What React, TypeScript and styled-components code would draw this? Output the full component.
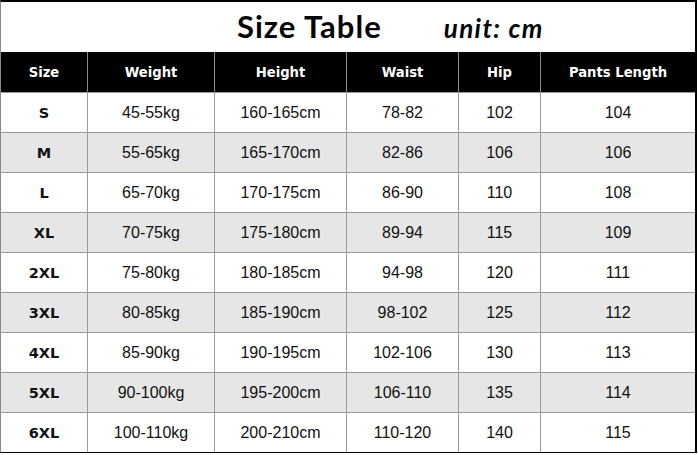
import React from "react";
import styled, { createGlobalStyle } from "styled-components";

const GlobalStyle = createGlobalStyle`
  html, body {
    margin: 0;
    padding: 0;
    background: #ffffff;
  }
`;

type Row = {
  size: string;
  weight: string;
  height: string;
  waist: string;
  hip: string;
  pants: string;
};

const rows: Row[] = [
  { size: "S", weight: "45-55kg", height: "160-165cm", waist: "78-82", hip: "102", pants: "104" },
  { size: "M", weight: "55-65kg", height: "165-170cm", waist: "82-86", hip: "106", pants: "106" },
  { size: "L", weight: "65-70kg", height: "170-175cm", waist: "86-90", hip: "110", pants: "108" },
  { size: "XL", weight: "70-75kg", height: "175-180cm", waist: "89-94", hip: "115", pants: "109" },
  { size: "2XL", weight: "75-80kg", height: "180-185cm", waist: "94-98", hip: "120", pants: "111" },
  { size: "3XL", weight: "80-85kg", height: "185-190cm", waist: "98-102", hip: "125", pants: "112" },
  { size: "4XL", weight: "85-90kg", height: "190-195cm", waist: "102-106", hip: "130", pants: "113" },
  { size: "5XL", weight: "90-100kg", height: "195-200cm", waist: "106-110", hip: "135", pants: "114" },
  { size: "6XL", weight: "100-110kg", height: "200-210cm", waist: "110-120", hip: "140", pants: "115" },
];

// last column takes what is left
const columns: { label: string; width?: number }[] = [
  { label: "Size", width: 86 },
  { label: "Weight", width: 126 },
  { label: "Height", width: 131 },
  { label: "Waist", width: 111 },
  { label: "Hip", width: 81 },
  { label: "Pants Length" },
];

const Sheet = styled.div`
  width: 694px;
  border-top: 2px solid #000;
  border-right: 2px solid #000;
  border-left: 1px solid #8a8a8a;
  border-bottom: 1px solid #000;
  background: #fff;
`;

const Title = styled.div`
  height: 50px;
  display: flex;
  align-items: baseline;
  padding-left: 236px;
  gap: 62px;
  color: #050505;
  font-family: "Lato", "Open Sans", sans-serif;
  font-weight: 700;
  line-height: 48px;
`;

const MainTitle = styled.span`
  font-size: 31px;
  letter-spacing: 1px;
`;

const Unit = styled.span`
  font-style: italic;
  font-size: 26px;
  letter-spacing: 1.4px;
`;

const Table = styled.table`
  width: 100%;
  border-collapse: collapse;
  table-layout: fixed;
`;

const HeadCell = styled.th<{ $w?: number }>`
  width: ${(p) => (p.$w ? `${p.$w}px` : "auto")};
  height: 40px;
  padding: 0;
  background: #000;
  color: #fff;
  font-family: "DejaVu Sans", "Verdana", sans-serif;
  font-weight: 700;
  font-size: 13.2px;
  text-align: center;
  border-left: 1px solid #8a8a8a;
  &:first-child {
    border-left: none;
  }
`;

const BodyRow = styled.tr<{ $shaded: boolean }>`
  background: ${(p) => (p.$shaded ? "#e6e6e6" : "#ffffff")};
`;

const Cell = styled.td<{ $bold?: boolean }>`
  height: 39px;
  padding: 0;
  text-align: center;
  color: #111;
  border-top: 1px solid #9a9a9a;
  border-left: 1px solid #9a9a9a;
  font-family: ${(p) =>
    p.$bold ? '"DejaVu Sans", "Verdana", sans-serif' : '"Liberation Sans", Arial, sans-serif'};
  font-weight: ${(p) => (p.$bold ? 700 : 400)};
  font-size: ${(p) => (p.$bold ? "14.5px" : "16px")};
  &:first-child {
    border-left: none;
  }
`;

export default function App() {
  return (
    <>
      <GlobalStyle />
      <Sheet>
        <Title>
          <MainTitle>Size Table</MainTitle>
          <Unit>unit: cm</Unit>
        </Title>
        <Table>
          <thead>
            <tr>
              {columns.map((c) => (
                <HeadCell key={c.label} $w={c.width}>
                  {c.label}
                </HeadCell>
              ))}
            </tr>
          </thead>
          <tbody>
            {rows.map((r, i) => (
              <BodyRow key={r.size} $shaded={i % 2 === 1}>
                <Cell $bold>{r.size}</Cell>
                <Cell>{r.weight}</Cell>
                <Cell>{r.height}</Cell>
                <Cell>{r.waist}</Cell>
                <Cell>{r.hip}</Cell>
                <Cell>{r.pants}</Cell>
              </BodyRow>
            ))}
          </tbody>
        </Table>
      </Sheet>
    </>
  );
}
